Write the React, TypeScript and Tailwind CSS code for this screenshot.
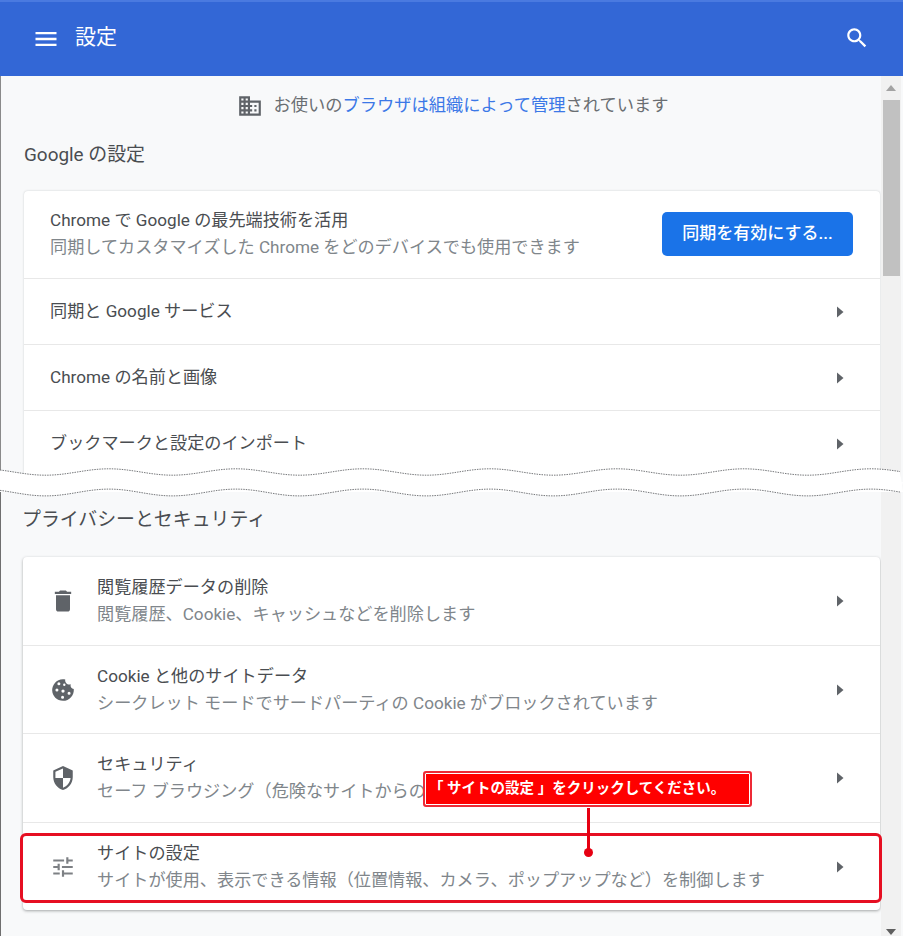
import React from "react";

const FONT = 'Roboto, "Noto Sans CJK JP", sans-serif';

function Mi({ d, size, className }: { d: string; size: number; className?: string }) {
  return (
    <svg width={size} height={size} viewBox="0 0 24 24" fill="currentColor" className={className}>
      <path d={d} fillRule="evenodd" />
    </svg>
  );
}

const dot = (x: number, y: number, r: number) =>
  `M${x} ${y - r}a${r} ${r} 0 1 0 0 ${2 * r}a${r} ${r} 0 1 0 0 ${-2 * r}z`;

const ICONS = {
  menu: "M3 18h18v-2H3v2zm0-5h18v-2H3v2zm0-7v2h18V6H3z",
  search:
    "M15.5 14h-.79l-.28-.27C15.41 12.59 16 11.11 16 9.5 16 5.91 13.09 3 9.5 3S3 5.91 3 9.5 5.91 16 9.5 16c1.61 0 3.09-.59 4.23-1.57l.27.28v.79l5 4.99L20.49 19l-4.99-5zm-6 0C7.01 14 5 11.99 5 9.5S7.01 5 9.5 5 14 7.01 14 9.5 11.99 14 9.5 14z",
  domain:
    "M12 7V3H2v18h20V7H12zM6 19H4v-2h2v2zm0-4H4v-2h2v2zm0-4H4V9h2v2zm0-4H4V5h2v2zm4 12H8v-2h2v2zm0-4H8v-2h2v2zm0-4H8V9h2v2zm0-4H8V5h2v2zm10 12h-8v-2h2v-2h-2v-2h2v-2h-2V9h8v10zm-2-8h-2v2h2v-2zm0 4h-2v2h2v-2z",
  trash: "M6 19c0 1.1.9 2 2 2h8c1.1 0 2-.9 2-2V7H6v12zM19 4h-3.5l-1-1h-5l-1 1H5v2h14V4z",
  cookie:
    "M21.95 10.99c-1.79-.03-3.7-1.95-2.68-4.22-2.98 1-5.77-1.59-5.19-4.56C6.95.71 2 6.58 2 12c0 5.52 4.48 10 10 10 5.89 0 10.54-5.08 9.95-11.01z" +
    dot(8.2, 6.2, 1.4) +
    dot(13.2, 7.2, 1.1) +
    dot(6.4, 12, 1.4) +
    dot(12, 13, 1.5) +
    dot(17.6, 15, 1.4) +
    dot(11.6, 18.6, 1.4),
  shield:
    "M12 1L3 5v6c0 5.55 3.84 10.74 9 12 5.16-1.26 9-6.45 9-12V5l-9-4zm0 10.99h7c-.53 4.12-3.28 7.79-7 8.94V12H5V6.3l7-3.11v8.8z",
  tune: "M3 17v2h6v-2H3zM3 5v2h10V5H3zm10 16v-2h8v-2h-8v-2h-2v6h2zM7 9v2H3v2h4v2h2V9H7zm14 4v-2H11v2h10zm-6-4h2V7h4V5h-4V3h-2v6z",
};

function Arrow() {
  return (
    <svg width="8" height="12" viewBox="0 0 8 12" className="shrink-0 text-[#5f6368]" fill="currentColor">
      <path d="M1 0.5L7.5 6L1 11.5z" />
    </svg>
  );
}

function SimpleRow({ label }: { label: string }) {
  return (
    <div className="flex h-[66px] items-center justify-between border-t border-[#e8e8e8] pl-[26px] pr-[36px]">
      <span className="text-[17.15px] text-[#4a4d51]">{label}</span>
      <Arrow />
    </div>
  );
}

function IconRow({
  icon,
  iconSize = 26,
  iconColor = "text-[#5f6368]",
  title,
  sub,
  first,
  height,
}: {
  icon: string;
  iconSize?: number;
  iconColor?: string;
  title: string;
  sub: string;
  first?: boolean;
  height: string;
}) {
  return (
    <div
      className={`flex items-center pl-[26px] pr-[36px] ${height} ${first ? "" : "border-t border-[#e8e8e8]"}`}
    >
      <div className="flex w-[28px] shrink-0 justify-center">
        <Mi d={icon} size={iconSize} className={iconColor} />
      </div>
      <div className="ml-[20px] flex-1 leading-[27px]">
        <div className="text-[17.15px] text-[#4a4d51]">{title}</div>
        <div className="text-[17.15px] text-[#80868b]">{sub}</div>
      </div>
      <Arrow />
    </div>
  );
}

function Scrollbar({ children }: { children?: React.ReactNode }) {
  return <div className="flex w-[20px] shrink-0 flex-col items-center bg-[#f1f1f1]">{children}</div>;
}

function wavePath(y: number, amp: number) {
  let d = "";
  for (let x = 0; x <= 903; x += 4) {
    const v = y - amp * Math.cos(((x - 109) / 127) * 2 * Math.PI);
    d += `${x === 0 ? "M" : "L"}${x} ${v.toFixed(2)} `;
  }
  return d;
}

function Band() {
  const top = wavePath(12, 3.2);
  const bottom = wavePath(32.5, 3.4);
  return (
    <svg width="903" height="44" viewBox="0 0 903 44" className="absolute left-0 top-[460px]">
      <path d={`${top} L903 32 L0 32 Z`} fill="#ffffff" />
      <path d={`${bottom} L903 22 L0 22 Z`} fill="#ffffff" />
      <path d={top} fill="none" stroke="#77797c" strokeWidth="1" strokeDasharray="1.5 1" />
      <path d={bottom} fill="none" stroke="#77797c" strokeWidth="1" strokeDasharray="1.5 1" />
    </svg>
  );
}

export default function App() {
  return (
    <div
      className="relative h-[936px] w-[903px] overflow-hidden bg-[#f8f9fa]"
      style={{ fontFamily: FONT }}
    >
      <header className="flex h-[76px] items-center justify-between border-t-2 border-[#4a7ae0] bg-[#3367d6] pl-[32px] pr-[33px] text-white">
        <div className="flex items-center">
          <Mi d={ICONS.menu} size={28} />
          <span className="mb-[2px] ml-[15px] text-[21px]">設定</span>
        </div>
        <Mi d={ICONS.search} size={26} className="mb-[2px]" />
      </header>

      <div className="flex h-[404px] border-l border-[#8a8a8a] pr-[2px]">
        <main className="min-w-0 flex-1 pl-[23px] pr-[1px]">
          <div className="flex h-[57px] items-center justify-center pl-[1px] pt-[3px] text-[17.25px] text-[#6a6e72]">
            <Mi d={ICONS.domain} size={26} className="mr-[11px] text-[#5f6368]" />
            <span>
              お使いの<span className="text-[#3b78e7]">ブラウザは組織によって管理</span>されています
            </span>
          </div>
          <h2 className="flex h-[42px] items-center pt-[2px] text-[18.9px] font-normal text-[#4a4d51]">Google の設定</h2>
          <section className="mt-[16px] rounded-t bg-white shadow-[0_0_2px_rgba(60,64,67,0.25)]">
            <div className="flex h-[87px] items-center justify-between pb-[2px] pl-[26px] pr-[27px]">
              <div className="leading-[27px]">
                <div className="text-[17.15px] text-[#4a4d51]">Chrome で Google の最先端技術を活用</div>
                <div className="text-[17.15px] text-[#80868b]">同期してカスタマイズした Chrome をどのデバイスでも使用できます</div>
              </div>
              <button className="flex h-[44px] w-[191px] items-center justify-center rounded-[5px] bg-[#1a73e8] text-[17px] font-medium text-white">
                同期を有効にする...
              </button>
            </div>
            <SimpleRow label="同期と Google サービス" />
            <SimpleRow label="Chrome の名前と画像" />
            <SimpleRow label="ブックマークと設定のインポート" />
          </section>
        </main>
        <Scrollbar>
          <svg width="10" height="6" viewBox="0 0 10 6" className="mt-[9px]" fill="#a3a3a3">
            <path d="M5 0L10 6H0z" />
          </svg>
          <div className="mt-[9px] h-[176px] w-[17px] bg-[#c1c1c1]" />
        </Scrollbar>
      </div>

      <div className="flex h-[456px] border-l border-[#6f6f6f] pr-[2px]">
        <main className="min-w-0 flex-1 pl-[22px] pr-[1px]">
          <h2 className="-ml-[1px] flex h-[78px] items-center pt-[2px] text-[18.9px] font-normal text-[#4a4d51]">
            プライバシーとセキュリティ
          </h2>
          <section className="mb-0 mt-[-1px] rounded-[4px] bg-white shadow-[0_1px_3px_rgba(60,64,67,0.45)]">
            <IconRow
              first
              height="h-[88px]"
              icon={ICONS.trash}
              iconSize={28}
              title="閲覧履歴データの削除"
              sub="閲覧履歴、Cookie、キャッシュなどを削除します"
            />
            <IconRow
              height="h-[88px]"
              icon={ICONS.cookie}
              title="Cookie と他のサイトデータ"
              sub="シークレット モードでサードパーティの Cookie がブロックされています"
            />
            <IconRow
              height="h-[89px]"
              icon={ICONS.shield}
              title="セキュリティ"
              sub="セーフ ブラウジング（危険なサイトからの"
            />
            <IconRow
              height="h-[88px]"
              icon={ICONS.tune}
              iconColor="text-[#7d8084]"
              title="サイトの設定"
              sub="サイトが使用、表示できる情報（位置情報、カメラ、ポップアップなど）を制御します"
            />
          </section>
        </main>
        <Scrollbar>
          <div className="flex-1" />
          <svg width="10" height="6" viewBox="0 0 10 6" className="mb-[1px]" fill="#5f5f5f">
            <path d="M0 0H10L5 6z" />
          </svg>
        </Scrollbar>
      </div>

      <Band />

      {/* highlight frame */}
      <div className="pointer-events-none absolute left-[20px] top-[833px] h-[70px] w-[862px] rounded-[6px] border-[3px] border-[#e60f22]" />

      {/* leader line */}
      <div className="absolute left-[587px] top-[808px] h-[44px] w-[3px] bg-[#e60012]" />
      <div className="absolute left-[584px] top-[848px] h-[9px] w-[9px] rounded-full bg-[#e60012]" />

      {/* callout */}
      <div className="absolute left-[423px] top-[771px] flex h-[36px] w-[329px] items-center rounded-[3px] border-2 border-[#ee2a36] bg-[#ff0000] pl-[4px] outline outline-1 -outline-offset-3 outline-white">
        <span className="text-[14.5px] font-bold text-white">「 サイトの設定 」をクリックしてください。</span>
      </div>
    </div>
  );
}
